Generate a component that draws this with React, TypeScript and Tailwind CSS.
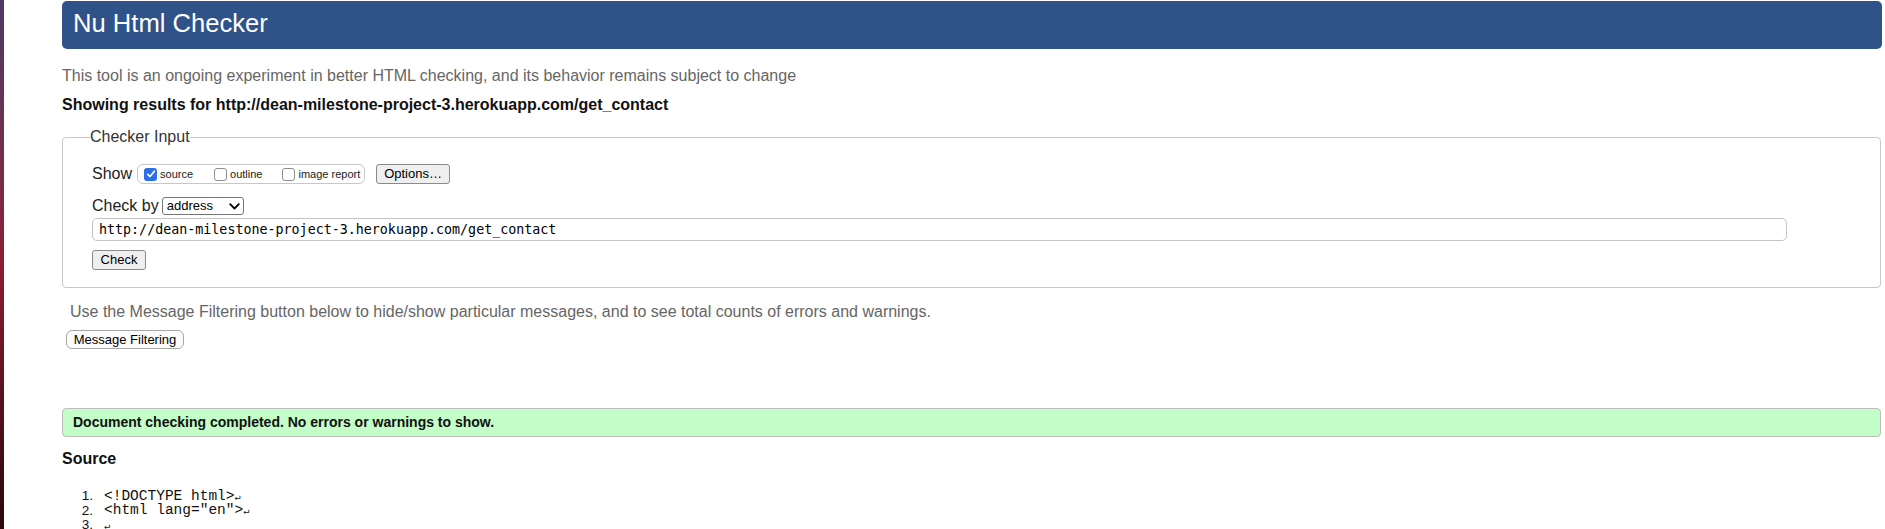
import React from 'react';

function Tick({ checked }: { checked?: boolean }) {
  if (checked) {
    return (
      <span className="w-[13px] h-[13px] rounded-[3px] bg-[#2c6fe6] flex items-center justify-center shrink-0">
        <svg width="10" height="10" viewBox="0 0 10 10">
          <path d="M1.8 5.3 L4 7.5 L8.4 2.2" fill="none" stroke="white" strokeWidth="1.7" strokeLinecap="round" strokeLinejoin="round" />
        </svg>
      </span>
    );
  }
  return <span className="w-[13px] h-[13px] rounded-[3px] border border-[#8c8c8c] bg-white shrink-0" />;
}

const lines = ['<!DOCTYPE html>', '<html lang="en">', ''];

export default function App() {
  return (
    <div className="flex min-h-screen bg-white text-[#111] font-['Liberation_Sans',Arial,sans-serif]">
      {/* desktop edge */}
      <div className="w-[4px] shrink-0 bg-gradient-to-b from-[#4d3868] via-[#8d1b34] to-[#2a070c]" />

      <main className="flex-1 pl-[58px] pr-[3px] pt-[1px]">
        <header className="h-[48px] rounded-[5px] bg-[#2f5288] flex items-center pl-[11px] pb-[3px]">
          <h1 className="text-[25.6px] leading-none text-white">Nu Html Checker</h1>
        </header>

        <p className="mt-[18px] text-[16px] leading-[18px] text-[#666]">
          This tool is an ongoing experiment in better HTML checking, and its behavior remains subject to change
        </p>
        <p className="mt-[11px] text-[16px] leading-[18px] font-bold text-[#111]">
          Showing results for http://dean-milestone-project-3.herokuapp.com/get_contact
        </p>

        <fieldset className="mt-[14px] mr-[1px] border border-[#c8c8c8] rounded-[4px] pl-[29px] pt-[18px] pb-[17px]">
          <legend className="-ml-[2px] text-[16px] leading-[18px] text-[#333]">Checker Input</legend>

          <div className="flex items-center h-[20px]">
            <span className="text-[16px] text-[#222]">Show</span>
            <div className="ml-[5px] h-[20px] w-[228px] border border-[#c7c7c7] rounded-[6px] flex items-center pl-[6px] text-[11px] text-[#222]">
              <label className="flex items-center">
                <Tick checked />
                <span className="ml-[3px]">source</span>
              </label>
              <label className="flex items-center ml-[21px]">
                <Tick />
                <span className="ml-[3px]">outline</span>
              </label>
              <label className="flex items-center ml-[20px]">
                <Tick />
                <span className="ml-[3px]">image report</span>
              </label>
            </div>
            <button className="ml-[11px] h-[20px] w-[74px] bg-[#efefef] border border-[#8a8a8a] rounded-[3px] text-[13px] text-black flex items-center justify-center">
              Options…
            </button>
          </div>

          <div className="mt-[13px] flex items-center h-[18px]">
            <span className="text-[16px] text-[#222]">Check by</span>
            <div className="ml-[3px] h-[18px] w-[82px] border border-[#767676] rounded-[3px] bg-white flex items-center justify-between pl-[4px] pr-[3px] text-[13px] text-black">
              <span>address</span>
              <svg width="11" height="7" viewBox="0 0 11 7">
                <path d="M1.2 1.2 L5.5 5.5 L9.8 1.2" fill="none" stroke="black" strokeWidth="1.8" strokeLinecap="round" strokeLinejoin="round" />
              </svg>
            </div>
          </div>

          <div className="mt-[3px] h-[23px] w-[1695px] border border-[#c4c4c4] rounded-[5px] flex items-center pl-[6px] text-[13.33px] text-black font-['DejaVu_Sans_Mono',monospace]">
            http://dean-milestone-project-3.herokuapp.com/get_contact
          </div>

          <button className="mt-[9px] h-[20px] w-[54px] bg-[#efefef] border border-[#8a8a8a] rounded-[3px] text-[13px] text-black flex items-center justify-center">
            Check
          </button>
        </fieldset>

        <p className="mt-[15px] ml-[8px] text-[16px] leading-[18px] text-[#666]">
          Use the Message Filtering button below to hide/show particular messages, and to see total counts of errors and warnings.
        </p>
        <button className="mt-[9px] ml-[4px] h-[19px] w-[118px] bg-[#fbfbfb] border border-[#a8a8a8] rounded-[6px] text-[13px] text-black flex items-center justify-center">
          Message Filtering
        </button>

        <div className="mt-[59px] mr-[1px] h-[29px] border border-[#bdbdbd] rounded-[4px] bg-[#c3fdc7] flex items-center pl-[10px] text-[14px] font-bold text-[#111]">
          Document checking completed. No errors or warnings to show.
        </div>

        <h2 className="mt-[13px] text-[16px] leading-[18px] font-bold text-[#111]">Source</h2>

        <ol className="mt-[21px]">
          {lines.map((l, i) => (
            <li key={i} className="flex items-center h-[14.5px] leading-[14px]">
              <span className="w-[31px] text-right text-[13.5px]">{i + 1}.</span>
              <code className="ml-[11px] text-[14.5px] whitespace-pre font-['Liberation_Mono',monospace]">
                {l}
                <span className="text-[10px] font-['DejaVu_Sans_Mono',monospace]">↵</span>
              </code>
            </li>
          ))}
        </ol>
      </main>
    </div>
  );
}
